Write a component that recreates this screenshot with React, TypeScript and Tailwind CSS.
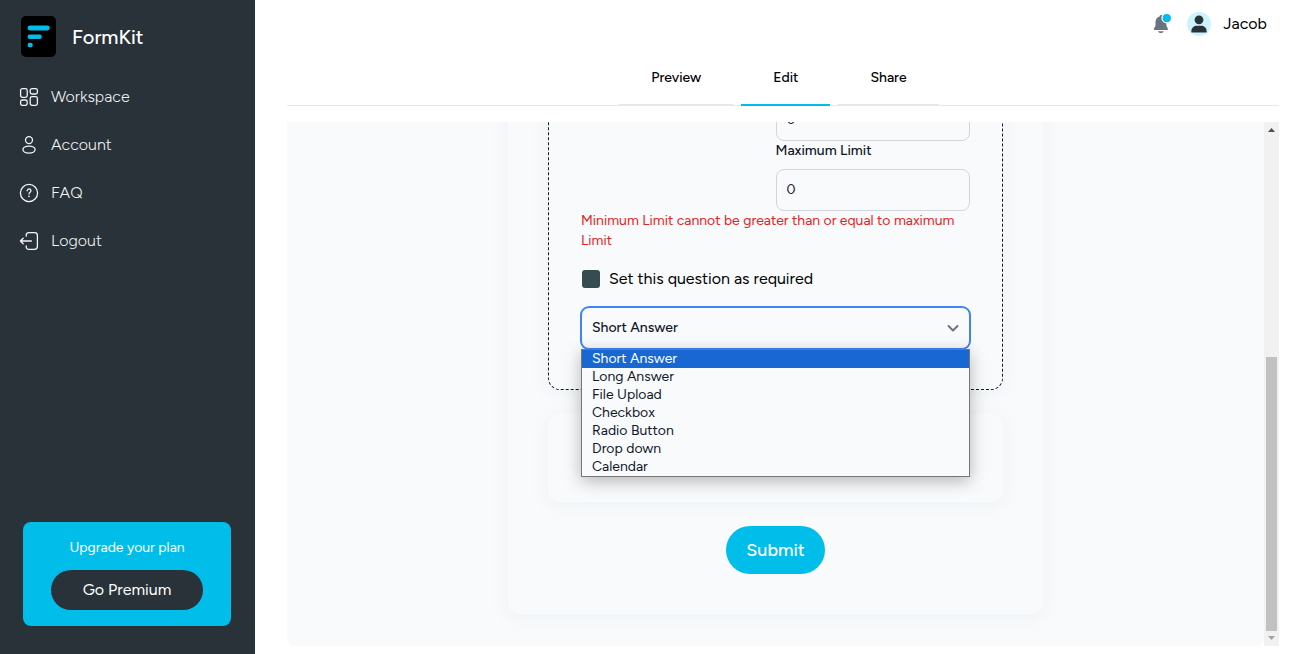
import React from 'react';
import clsx from 'clsx';

const questionTypes = [
  'Short Answer',
  'Long Answer',
  'File Upload',
  'Checkbox',
  'Radio Button',
  'Drop down',
  'Calendar',
];

const tabs = [
  { label: 'Preview', active: false },
  { label: 'Edit', active: true },
  { label: 'Share', active: false },
];

const iconProps = {
  width: 20,
  height: 20,
  viewBox: '0 0 20 20',
  fill: 'none',
  stroke: 'currentColor',
  strokeWidth: 1.3,
  strokeLinecap: 'round' as const,
  strokeLinejoin: 'round' as const,
  'aria-hidden': true,
};

const WorkspaceIcon = () => (
  <svg {...iconProps}>
    <rect x="1.6" y="1.6" width="6.6" height="8.8" rx="1.8" />
    <rect x="1.6" y="13" width="6.6" height="5.4" rx="1.8" />
    <rect x="11.2" y="1.6" width="7.2" height="5.4" rx="1.8" />
    <rect x="11.2" y="9.6" width="7.2" height="8.8" rx="1.8" />
  </svg>
);

const AccountIcon = () => (
  <svg {...iconProps}>
    <circle cx="10" cy="5.1" r="3.5" />
    <ellipse cx="10" cy="14.6" rx="6.1" ry="3.5" />
  </svg>
);

const FaqIcon = () => (
  <svg {...iconProps}>
    <circle cx="10" cy="10" r="8.6" />
    <path d="M8.2 7.8a1.85 1.85 0 1 1 2.9 1.5c-.7.5-1.1.8-1.1 1.6" strokeWidth="1.3" />
    <path d="M10 13.4v.1" strokeWidth="1.6" />
  </svg>
);

const LogoutIcon = () => (
  <svg {...iconProps}>
    <path d="M7.2 5.2V4.4c0-1.7 1.1-2.8 2.8-2.8h5.6c1.7 0 2.8 1.1 2.8 2.8v11.2c0 1.7-1.1 2.8-2.8 2.8H10c-1.7 0-2.8-1.1-2.8-2.8v-.8" />
    <path d="M12.4 10H1.6M4.2 7.2 1.4 10l2.8 2.8" />
  </svg>
);

const navItems = [
  { label: 'Workspace', icon: WorkspaceIcon },
  { label: 'Account', icon: AccountIcon },
  { label: 'FAQ', icon: FaqIcon },
  { label: 'Logout', icon: LogoutIcon },
];

const Sidebar = () => (
  <aside className="flex w-[255px] shrink-0 flex-col bg-[#283238] text-gray-100">
    <div className="flex items-center gap-4 pt-4 pl-[21px]">
      <svg width="35" height="41" viewBox="0 0 35 41" role="img" aria-label="FormKit logo">
        <rect width="35" height="41" rx="5" fill="#000" />
        <g fill="#00bde9">
          <rect x="6.6" y="9.6" width="22.2" height="4.8" rx="2.4" />
          <rect x="6.6" y="18.4" width="14.2" height="4.6" rx="2.3" />
          <rect x="6.6" y="26.8" width="5.2" height="4.4" rx="2.2" />
        </g>
      </svg>
      <span className="text-xl font-medium text-white">FormKit</span>
    </div>

    <nav className="mt-4 flex flex-col">
      {navItems.map(({ label, icon: NavIcon }) => (
        <a key={label} href="#" className="flex h-12 items-center gap-3 pl-[19px] text-base font-light">
          <NavIcon />
          {label}
        </a>
      ))}
    </nav>

    <div className="mt-auto mr-6 mb-7 ml-[23px] flex flex-col items-center rounded-lg bg-[#00bde9] px-7 py-4">
      <p className="text-sm text-white">Upgrade your plan</p>
      <button type="button" className="mt-3 h-10 w-full rounded-full bg-[#283238] text-base text-white">
        Go Premium
      </button>
    </div>
  </aside>
);

const Header = () => (
  <header className="flex h-12 items-center justify-end pr-3">
    <button type="button" aria-label="Notifications" className="mr-4">
      <svg width="18" height="20" viewBox="0 0 18 20">
        <path
          d="M8 1.2C8.6.9 9.4 1.1 9.4 2v.6c3 .6 4 2.8 4 5.6v3.6l1.4 2.6v1.6H1v-1.6l1.5-2.6V8.2c0-2.8 1.5-5 4.1-5.6V2c0-.5.4-.7 1.4-.8Z"
          fill="#6b7280"
        />
        <path d="M5 17.2h5.8c-.5 1.2-1.5 1.8-2.9 1.8S5.5 18.4 5 17.2Z" fill="#6b7280" />
        <circle cx="13.8" cy="4" r="5.4" fill="#fff" />
        <circle cx="13.8" cy="4.2" r="4.1" fill="#00bde9" />
      </svg>
    </button>
    <svg width="24" height="24" viewBox="0 0 24 24" aria-hidden="true">
      <circle cx="12" cy="12" r="12" fill="#ccf2fb" />
      <circle cx="12" cy="7.8" r="4.4" fill="#283238" />
      <path d="M4.4 20.4v-1.2c0-3.4 2.6-5.4 5.6-5.4h4c3 0 5.6 2 5.6 5.4v1.2Z" fill="#283238" />
    </svg>
    <span className="ml-3 text-base text-black">Jacob</span>
  </header>
);

const Tabs = () => (
  <div role="tablist" className="flex justify-center gap-2 border-b border-gray-200 pr-2">
    {tabs.map((tab) => (
      <button
        key={tab.label}
        type="button"
        role="tab"
        aria-selected={tab.active}
        className={clsx(
          '-mb-px h-[58px] border-b-2 px-8 pt-1 text-sm font-medium text-black',
          tab.active ? 'border-[#00bde9]' : 'border-gray-200',
        )}
      >
        {tab.label}
      </button>
    ))}
  </div>
);

const inputClass =
  'block h-[42px] w-full rounded-lg border border-gray-300 bg-[#f9fafc] px-[10px] pb-[2px] text-sm text-gray-900';

const TypeSelect = () => (
  <div className="relative mt-4">
    <select
      aria-label="Question type"
      defaultValue="Short Answer"
      className="block h-[42px] w-full appearance-none rounded-lg border border-[#3f83f8] bg-[#f9fafc] px-[10px] text-sm font-medium text-gray-900 ring-1 ring-[#3f83f8]"
    >
      {questionTypes.map((type) => (
        <option key={type}>{type}</option>
      ))}
    </select>
    <svg
      className="pointer-events-none absolute top-[15px] right-[11px]"
      width="12"
      height="12"
      viewBox="0 0 12 12"
      fill="none"
      stroke="#6b7280"
      strokeWidth="2"
      strokeLinecap="round"
      strokeLinejoin="round"
    >
      <path d="M1.5 4 6 8.5 10.5 4" />
    </svg>

    {/* Open option list */}
    <ul
      role="listbox"
      className="absolute top-full left-0 z-10 w-full border border-[#767676] bg-[#f9fafc] text-sm leading-[18px] text-gray-900 shadow-[0_4px_16px_rgba(0,0,0,0.28)]"
    >
      {questionTypes.map((type, idx) => (
        <li
          key={type}
          role="option"
          aria-selected={idx === 0}
          className={clsx('px-[10px]', idx === 0 && 'bg-[#1967d2] text-white')}
        >
          {type}
        </li>
      ))}
    </ul>
  </div>
);

const FormCard = () => (
  <form className="mx-auto mb-8 flex w-full max-w-[535px] shrink-0 flex-col rounded-xl bg-[#f9fafc] p-10 shadow-[0_3px_16px_4px_#f1f5f7]">
    <section className="rounded-xl border border-dashed border-[#111b20] px-8 pt-8 pb-10 shadow-[0_3px_16px_4px_#f1f5f7]">
      <div className="ml-auto w-1/2">
        <input type="text" aria-label="Minimum Limit" defaultValue="0" className={inputClass} />
        <label htmlFor="max-limit" className="mb-2 block text-sm font-medium text-gray-900">
          Maximum Limit
        </label>
        <input id="max-limit" type="text" defaultValue="0" className={inputClass} />
      </div>
      <p className="text-sm text-[#e02424]">
        Minimum Limit cannot be greater than or equal to maximum Limit
      </p>
      <div className="mt-4 flex items-center">
        <input
          id="required"
          type="checkbox"
          className="ml-px size-[18px] appearance-none rounded-[3px] bg-[#374c51]"
        />
        <label htmlFor="required" className="ml-[9px] text-base text-black">
          Set this question as required
        </label>
      </div>
      <TypeSelect />
    </section>

    <section className="mt-6 h-[88px] rounded-xl bg-[#f9fafc] shadow-[0_3px_16px_4px_#f1f5f7]" />

    <button
      type="submit"
      className="mt-6 h-12 w-[99px] self-center rounded-full bg-[#00bde9] text-lg font-medium text-white"
    >
      Submit
    </button>
  </form>
);

const Scrollbar = () => (
  <div className="flex w-[15px] shrink-0 flex-col items-center bg-[#f1f1f1] py-[6px]" aria-hidden="true">
    <svg width="7" height="4" viewBox="0 0 7 4">
      <path d="M0 4 3.5 0 7 4Z" fill="#505050" />
    </svg>
    <div className="mt-auto h-[274px] w-[11px] bg-[#c1c1c1]" />
    <svg width="7" height="4" viewBox="0 0 7 4" className="mt-[5px]">
      <path d="M0 0 3.5 4 7 0Z" fill="#a3a3a3" />
    </svg>
  </div>
);

export default function App() {
  return (
    <div className="flex h-screen bg-white font-['Figtree','Lato',sans-serif]">
      <Sidebar />
      <main className="flex min-w-0 flex-1 flex-col pr-[26px] pb-2 pl-8">
        <Header />
        <Tabs />
        <div className="mt-4 flex min-h-0 flex-1 overflow-hidden">
          {/* Content stays pinned to the end of the form */}
          <div className="flex min-w-0 flex-1 flex-col justify-end overflow-hidden rounded-b-lg bg-[#f9fafc]">
            <FormCard />
          </div>
          <Scrollbar />
        </div>
      </main>
    </div>
  );
}
